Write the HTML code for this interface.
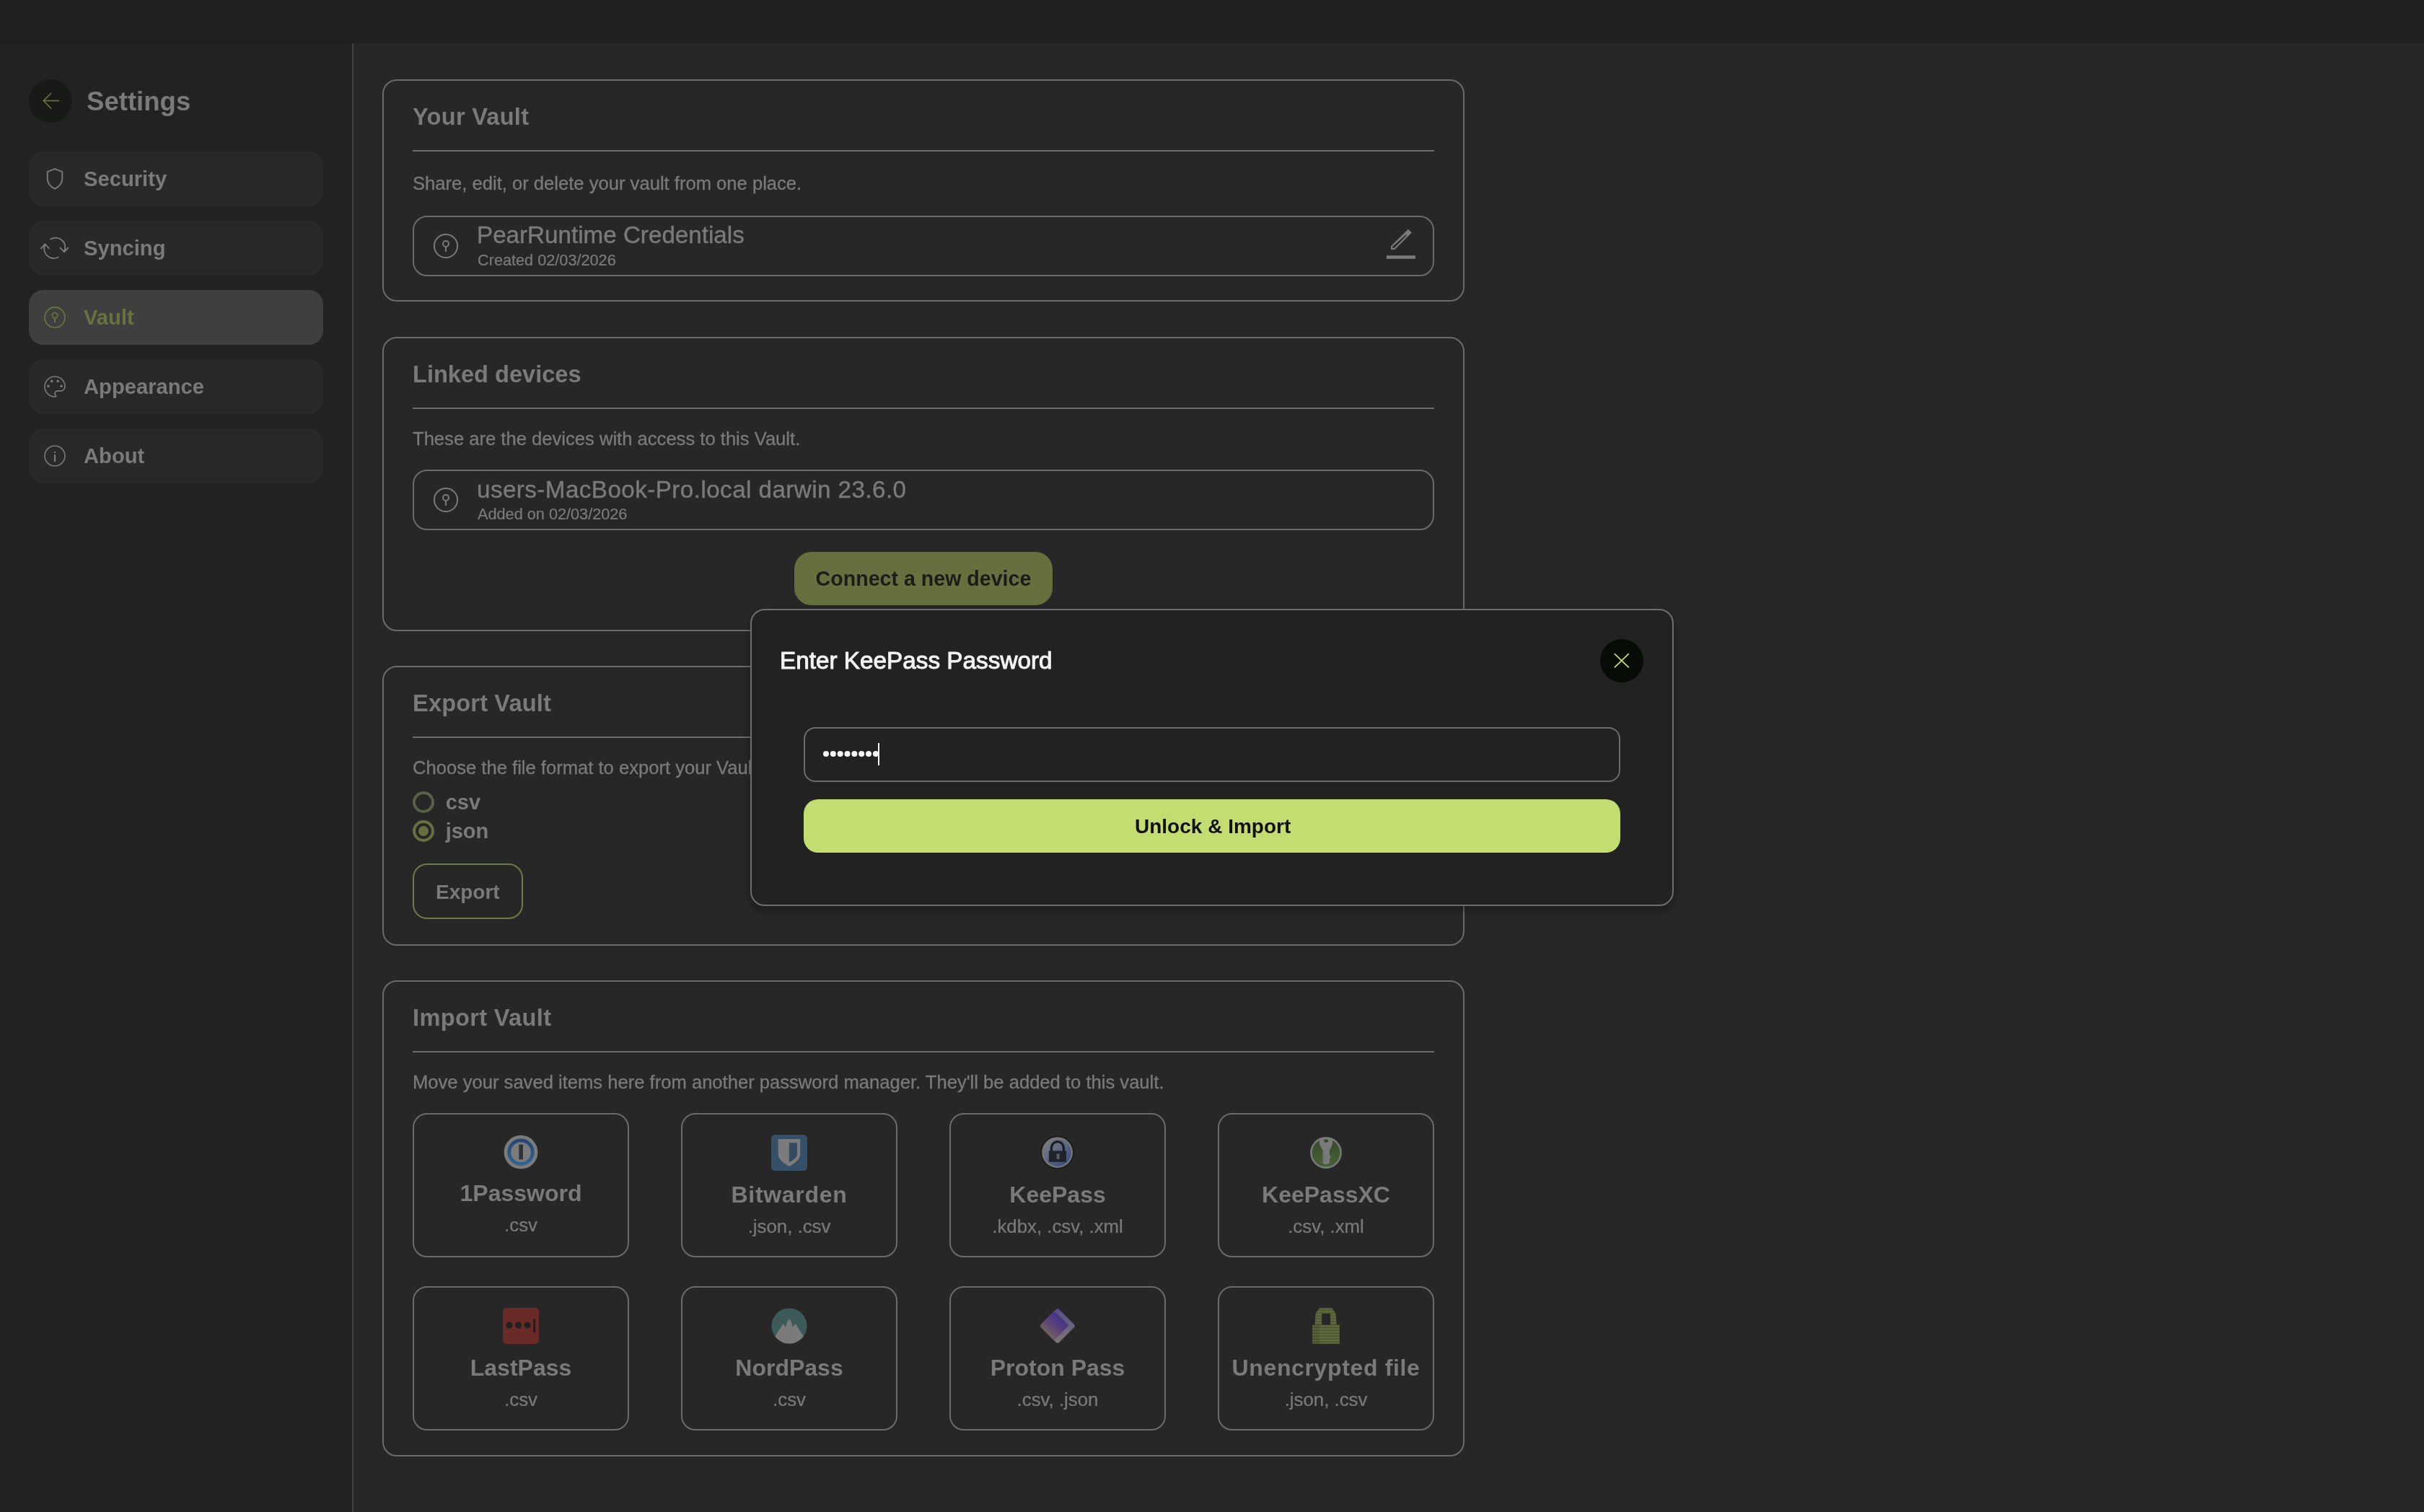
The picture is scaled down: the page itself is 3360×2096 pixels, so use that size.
<!DOCTYPE html>
<html>
<head>
<meta charset="utf-8">
<style>
html{zoom:2}
@media (max-width:2000px){html{zoom:1}}
html,body{margin:0;padding:0;background:#272727;overflow:hidden}
body{width:1680px;height:1048px;position:relative;will-change:transform;font-family:"Liberation Sans",sans-serif;color:#7a7a7a}
.abs{position:absolute}
.t{position:absolute;line-height:1;white-space:nowrap}
#topbar{left:0;top:0;width:1680px;height:30px;background:#202020}
#side{left:0;top:30px;width:244px;height:1018px;background:#222222;border-right:1px solid #434343}
.nav{position:absolute;left:20px;width:204px;height:38px;border-radius:10px;background:#292929}
.nav.on{background:#3f3f3f}
.nav svg{position:absolute;left:10px;top:11px}
.card{position:absolute;left:265px;width:748px;border:1px solid #6b6b6b;border-radius:10px}
.div{position:absolute;left:20px;width:708px;height:1px;background:#6b6b6b}
.row{position:absolute;left:20px;width:706px;border:1px solid #6b6b6b;border-radius:10px}
.title{font-weight:700;font-size:16.3px}
.desc{font-size:12.8px;-webkit-text-stroke:0.15px #7a7a7a}
.tile{position:absolute;width:148px;height:98px;border:1px solid #6b6b6b;border-radius:10px}
.tile .nm{position:absolute;left:0;width:148px;text-align:center;font-weight:700;font-size:16px;line-height:1;white-space:nowrap}
.tile .ex{position:absolute;left:0;width:148px;text-align:center;font-size:12.9px;-webkit-text-stroke:0.12px #7a7a7a;line-height:1;white-space:nowrap}
.tile .ic{position:absolute;left:62px;top:14px;width:24px;height:24px}
</style>
</head>
<body>
<div id="topbar" class="abs"></div>
<div id="side" class="abs">
  <!-- back button -->
  <div class="abs" style="left:20px;top:25px;width:30px;height:30px;border-radius:50%;background:#181a17">
    <svg width="30" height="30" viewBox="0 0 30 30" style="position:absolute;left:0;top:0"><path d="M20.75 14.8H10.1M15.4 9.6L10.1 14.8L15.4 20.15" fill="none" stroke="#66733f" stroke-width="0.8" stroke-linecap="round" stroke-linejoin="round"/></svg>
  </div>
  <div class="t" style="left:60px;top:31.7px;font-size:18.3px;font-weight:700">Settings</div>

  <div class="nav" style="top:75px">
    <svg width="16" height="16" viewBox="0 0 16 16"><path d="M8 1.05L13.15 3.1V7.9C13.15 11 11 13.3 8 14.85C5 13.3 2.85 11 2.85 7.9V3.1Z" fill="none" stroke="#7a7a7a" stroke-width="0.95" stroke-linejoin="round"/></svg>
    <div class="t" style="left:38px;top:12px;font-size:14.6px;font-weight:700">Security</div>
  </div>
  <div class="nav" style="top:123px">
    <svg width="22" height="16" viewBox="0 0 22 16" style="left:7px"><path d="M8.1 1.75A6.65 6.65 0 0 1 17.55 10.3M14.75 7.8L17.55 10.65L20.2 7.8M13.4 14.25A6.65 6.65 0 0 1 4.25 5.5M1.4 8.2L4.25 5.2L6.85 8.1" fill="none" stroke="#7a7a7a" stroke-width="0.9" stroke-linecap="round" stroke-linejoin="round"/></svg>
    <div class="t" style="left:38px;top:12px;font-size:14.6px;font-weight:700">Syncing</div>
  </div>
  <div class="nav on" style="top:171px">
    <svg width="16" height="16" viewBox="0 0 16 16"><circle cx="8" cy="8" r="7" fill="none" stroke="#66733f" stroke-width="0.9"/><circle cx="8.05" cy="6.65" r="1.8" fill="none" stroke="#66733f" stroke-width="0.9"/><path d="M8.05 8.45V11.55" stroke="#66733f" stroke-width="1.1"/></svg>
    <div class="t" style="left:38px;top:12px;font-size:14.6px;font-weight:700;color:#66733f">Vault</div>
  </div>
  <div class="nav" style="top:219px">
    <svg width="16" height="16" viewBox="0 0 16 16"><path d="M8.9 14.6C8.3 13.9 7.7 13.2 8.1 12.2C8.5 11.2 9.3 10.95 10.2 10.95H12.25C13.9 10.95 15 9.4 15 7.8C15 4 11.8 1 8 1C4.1 1 1 4.1 1 8C1 11.9 4.1 15 8 15C8.3 15 8.6 14.9 8.9 14.6Z" fill="none" stroke="#7a7a7a" stroke-width="0.8"/><circle cx="5.85" cy="4.2" r="0.9" fill="#7a7a7a"/><circle cx="10.1" cy="4.2" r="0.9" fill="#7a7a7a"/><circle cx="3.45" cy="7.6" r="0.9" fill="#7a7a7a"/><circle cx="12.55" cy="7.6" r="0.9" fill="#7a7a7a"/></svg>
    <div class="t" style="left:38px;top:12px;font-size:14.6px;font-weight:700">Appearance</div>
  </div>
  <div class="nav" style="top:267px">
    <svg width="16" height="16" viewBox="0 0 16 16"><circle cx="8" cy="8" r="7" fill="none" stroke="#7a7a7a" stroke-width="0.8"/><rect x="7.45" y="5" width="1.15" height="1" fill="#7a7a7a"/><rect x="7.45" y="7.1" width="1.15" height="4.85" fill="#7a7a7a"/></svg>
    <div class="t" style="left:38px;top:12px;font-size:14.6px;font-weight:700">About</div>
  </div>
</div>

<!-- CARD 1 -->
<div class="card" style="top:55px;height:152px">
  <div class="t title" style="left:20px;top:17px;letter-spacing:0.13px">Your Vault</div>
  <div class="div" style="top:48px"></div>
  <div class="t desc" style="left:20px;top:65px">Share, edit, or delete your vault from one place.</div>
  <div class="row" style="top:93.5px;height:40px">
    <svg class="abs" width="18" height="18" viewBox="0 0 18 18" style="left:13px;top:10.95px"><circle cx="9" cy="9" r="8.05" fill="none" stroke="#7a7a7a" stroke-width="1"/><circle cx="9" cy="7.5" r="2" fill="none" stroke="#7a7a7a" stroke-width="1"/><path d="M9 9.5V13" stroke="#7a7a7a" stroke-width="1.1"/></svg>
    <div class="t" style="left:43.5px;top:4px;font-size:16.6px;-webkit-text-stroke:0.2px #7a7a7a">PearRuntime Credentials</div>
    <div class="t" style="left:44px;top:24.5px;font-size:10.85px;-webkit-text-stroke:0.12px #7a7a7a">Created 02/03/2026</div>
    <svg class="abs" width="30" height="30" viewBox="0 0 30 30" style="left:670px;top:0.5px"><path d="M7 22L7 19.6L18.95 7.9L21.4 10.25L9.7 22Z M8.05 19.95L8.05 20.9L9.35 20.9L17.8 12.3L17.45 11.6Z" fill="#7a7a7a" fill-rule="evenodd"/><rect x="3.95" y="26.1" width="20" height="2.3" fill="#7a7a7a"/></svg>
  </div>
</div>

<!-- CARD 2 -->
<div class="card" style="top:233.5px;height:202px">
  <div class="t title" style="left:20px;top:17px">Linked devices</div>
  <div class="div" style="top:48px"></div>
  <div class="t desc" style="left:20px;top:63.5px">These are the devices with access to this Vault.</div>
  <div class="row" style="top:91px;height:40px">
    <svg class="abs" width="18" height="18" viewBox="0 0 18 18" style="left:13px;top:11px"><circle cx="9" cy="9" r="8.05" fill="none" stroke="#7a7a7a" stroke-width="1"/><circle cx="9" cy="7.5" r="2" fill="none" stroke="#7a7a7a" stroke-width="1"/><path d="M9 9.5V13" stroke="#7a7a7a" stroke-width="1.1"/></svg>
    <div class="t" style="left:43.5px;top:4.7px;font-size:16.6px;letter-spacing:0.22px;-webkit-text-stroke:0.2px #7a7a7a">users-MacBook-Pro.local darwin 23.6.0</div>
    <div class="t" style="left:44px;top:24.5px;font-size:10.85px;-webkit-text-stroke:0.12px #7a7a7a">Added on 02/03/2026</div>
  </div>
  <div class="abs" style="left:284.5px;top:148px;width:179px;height:37px;border-radius:12px;background:#66703f"></div>
  <div class="t" style="left:299.3px;top:159.7px;font-size:14.3px;font-weight:700;color:#1c1d18">Connect a new device</div>
</div>

<!-- CARD 3 -->
<div class="card" style="top:461.5px;height:192px">
  <div class="t title" style="left:20px;top:17px;letter-spacing:0.08px">Export Vault</div>
  <div class="div" style="top:48px"></div>
  <div class="t desc" style="left:20px;top:63.5px">Choose the file format to export your Vault:</div>
  <div class="abs" style="left:20px;top:86px;width:11px;height:11px;border:2px solid #596143;border-radius:50%"></div>
  <div class="t" style="left:42.85px;top:86.4px;font-size:14.5px;font-weight:700">csv</div>
  <div class="abs" style="left:20px;top:106px;width:11px;height:11px;border:2px solid #65713f;border-radius:50%"></div>
  <div class="abs" style="left:23.95px;top:109.95px;width:7.1px;height:7.1px;background:#65703f;border-radius:50%"></div>
  <div class="t" style="left:42.85px;top:106.65px;font-size:14.5px;font-weight:700">json</div>
  <div class="abs" style="left:20px;top:136px;width:74.5px;height:36.5px;border:1px solid #6f7b45;border-radius:10px"></div>
  <div class="t" style="left:36px;top:149px;font-size:14.0px;font-weight:700">Export</div>
</div>

<!-- CARD 4 -->
<div class="card" style="top:679.5px;height:328px">
  <div class="t title" style="left:20px;top:17px;letter-spacing:0.17px">Import Vault</div>
  <div class="div" style="top:48px"></div>
  <div class="t desc" style="left:20px;top:63.5px">Move your saved items here from another password manager. They'll be added to this vault.</div>
  <div class="tile" style="left:20px;top:91px">
    <svg class="abs" width="25" height="25" viewBox="0 0 50 50" style="left:61.5px;top:14px"><defs><linearGradient id="opg" x1="0" y1="0" x2="0" y2="1"><stop offset="0" stop-color="#244676"/><stop offset="1" stop-color="#306491"/></linearGradient></defs><circle cx="25" cy="24.2" r="23.4" fill="#7b7b7b"/><circle cx="25" cy="24.2" r="16.3" fill="none" stroke="url(#opg)" stroke-width="4.8"/><rect x="22.4" y="13.65" width="5.5" height="20.65" fill="#2e3236"/></svg>
    <div class="nm" style="top:46.3px">1Password</div>
    <div class="ex" style="top:70.35px">.csv</div>
  </div>
  <div class="tile" style="left:206px;top:91px">
    <svg class="abs" width="25" height="25" viewBox="0 0 50 50" style="left:61.5px;top:14px"><rect x="0" y="0" width="50" height="50" rx="5.5" fill="#36506a"/><path d="M9.7 6H40.2V27C40.2 34 33 39.5 25 43.8C17 39.5 9.7 34 9.7 27Z" fill="#7b7b7b"/><path d="M24.8 11.3H35.9V27C35.9 31.5 31 35.5 24.8 37.9Z" fill="#344b62"/></svg>
    <div class="nm" style="top:47.5px;letter-spacing:0.35px">Bitwarden</div>
    <div class="ex" style="top:71.45px">.json, .csv</div>
  </div>
  <div class="tile" style="left:392px;top:91px">
    <svg class="abs" width="25" height="25" viewBox="0 0 50 50" style="left:61.5px;top:14px"><defs><linearGradient id="kpg" x1="0.15" y1="0.1" x2="0.85" y2="0.9"><stop offset="0" stop-color="#777a82"/><stop offset="0.5" stop-color="#5d6582"/><stop offset="1" stop-color="#3b4c86"/></linearGradient></defs><circle cx="24.6" cy="24.6" r="23.2" fill="#1a1a1a"/><circle cx="24.6" cy="24.6" r="21.4" fill="#777"/><circle cx="24.6" cy="24.6" r="19.2" fill="url(#kpg)"/><path d="M16.4 23.5V18.1A8.5 8.5 0 0 1 33.4 18.1V23.5" fill="none" stroke="#1c1d22" stroke-width="3.3"/><rect x="12.9" y="22.4" width="24.1" height="15.3" fill="#202329"/><rect x="23.6" y="26.3" width="3.9" height="7.4" fill="#5a6070"/></svg>
    <div class="nm" style="top:47.5px">KeePass</div>
    <div class="ex" style="top:71.45px">.kdbx, .csv, .xml</div>
  </div>
  <div class="tile" style="left:578px;top:91px">
    <svg class="abs" width="25" height="25" viewBox="0 0 50 50" style="left:61.5px;top:14px"><defs><linearGradient id="kxg" x1="0" y1="0" x2="0" y2="1"><stop offset="0" stop-color="#34492b"/><stop offset="1" stop-color="#4a6334"/></linearGradient></defs><circle cx="25" cy="25" r="20.6" fill="url(#kxg)" stroke="#787878" stroke-width="2.6"/><path d="M15.6 8.5Q15.6 5 20 5H30Q34.3 5 34.3 8.5Q34.3 15.5 29.9 21V28.5L31.6 30.2V31.8L29.9 33V39.2Q25.2 42.5 20.4 39.2V21Q15.6 15.5 15.6 8.5Z" fill="#7a7a7a"/><ellipse cx="25.2" cy="8.6" rx="3" ry="2.2" fill="#34492b"/><path d="M21.9 21.5V37" stroke="#656565" stroke-width="0.9"/></svg>
    <div class="nm" style="top:47.5px">KeePassXC</div>
    <div class="ex" style="top:71.45px">.csv, .xml</div>
  </div>
  <div class="tile" style="left:20px;top:211px">
    <svg class="abs" width="25" height="25" viewBox="0 0 50 50" style="left:61.5px;top:14px"><rect x="0" y="0" width="50" height="50" rx="5" fill="#6a2a28"/><circle cx="9" cy="24" r="4.6" fill="#232020"/><circle cx="21.6" cy="24" r="4.6" fill="#232020"/><circle cx="34" cy="24" r="4.6" fill="#232020"/><rect x="42" y="15.6" width="3.2" height="18.8" rx="1" fill="#232020"/></svg>
    <div class="nm" style="top:47.5px">LastPass</div>
    <div class="ex" style="top:71.45px">.csv</div>
  </div>
  <div class="tile" style="left:206px;top:211px">
    <svg class="abs" width="25" height="25" viewBox="0 0 50 50" style="left:61.5px;top:14px"><defs><clipPath id="npc"><circle cx="25" cy="25" r="24.5"/></clipPath></defs><circle cx="25" cy="25" r="24.5" fill="#3d5a5a"/><path d="M0 50L5.7 39L16.4 22L20 26.7L23.2 16.5H26.8L30 26.7L33.6 22L44.3 39L50 50Z" fill="#7b7b7b" clip-path="url(#npc)"/></svg>
    <div class="nm" style="top:47.5px">NordPass</div>
    <div class="ex" style="top:71.45px">.csv</div>
  </div>
  <div class="tile" style="left:392px;top:211px">
    <svg class="abs" width="25" height="25" viewBox="0 0 50 50" style="left:61.5px;top:14px"><defs><linearGradient id="ppg" x1="0.9" y1="0.1" x2="0.15" y2="0.95"><stop offset="0" stop-color="#392f8a"/><stop offset="0.45" stop-color="#573f7c"/><stop offset="1" stop-color="#7e6c57"/></linearGradient><linearGradient id="ppb" x1="0.5" y1="0" x2="0.5" y2="1"><stop offset="0" stop-color="#574f86"/><stop offset="1" stop-color="#7d7676"/></linearGradient></defs><path d="M22.5 2.5Q25 0 27.5 2.5L47.5 22.5Q50 25 47.5 27.5L27.5 47.5Q25 50 22.5 47.5L2.5 27.5Q0 25 2.5 22.5Z" fill="url(#ppb)"/><path d="M17.8 6.7Q20.3 4.3 22.8 6.7L38.5 22.3Q40.6 24.4 38.5 26.6L22.6 42.8Q20 45.4 17.4 42.8L2.5 27.5Q0 25 2.5 22.5Z" fill="url(#ppg)"/></svg>
    <div class="nm" style="top:47.5px">Proton Pass</div>
    <div class="ex" style="top:71.45px">.csv, .json</div>
  </div>
  <div class="tile" style="left:578px;top:211px">
    <svg class="abs" width="25" height="25" viewBox="0 0 50 50" style="left:61.5px;top:14px"><defs><pattern id="ufs" width="50" height="4" patternUnits="userSpaceOnUse"><rect width="50" height="4" fill="#5f6b3d"/><rect y="2.4" width="50" height="1.6" fill="#4d5733"/></pattern></defs><path d="M16 0.2H33.5L38.6 8L39.8 23.6H31.1V8.1H19.2V23.6H9.7L10.5 8Z" fill="url(#ufs)"/><rect x="6.1" y="23.6" width="37.7" height="26.2" fill="url(#ufs)"/><rect x="6.1" y="23.6" width="10" height="26.2" fill="#000" opacity="0.1"/></svg>
    <div class="nm" style="top:47.5px;letter-spacing:0.32px">Unencrypted file</div>
    <div class="ex" style="top:71.45px">.json, .csv</div>
  </div>
</div>

<!-- overlay modal -->
<div class="abs" style="left:520px;top:422px;width:638px;height:204px;background:#222222;border:1px solid #6e6e6e;border-radius:10px;box-shadow:0 3px 6px rgba(0,0,0,0.3)">
  <div class="t" style="left:19.5px;top:26.5px;font-size:16.65px;color:#f2f2f2;-webkit-text-stroke:0.5px #f2f2f2">Enter KeePass Password</div>
  <div class="abs" style="left:588px;top:20px;width:30px;height:30px;border-radius:50%;background:#080c06">
    <svg width="30" height="30" viewBox="0 0 30 30" style="position:absolute;left:0;top:0"><path d="M9.9 10.1L19.9 19.7M19.9 10.1L9.9 19.7" stroke="#c4dd70" stroke-width="0.9"/></svg>
  </div>
  <div class="abs" style="left:36px;top:81px;width:564px;height:36px;border:1px solid #6c6c6c;border-radius:8px"></div>
  <svg class="abs" width="50" height="6" viewBox="0 0 100 12" style="left:49.35px;top:96.5px"><circle cx="4.00" cy="6" r="4" fill="#f5f5f5"/><circle cx="13.84" cy="6" r="4" fill="#f5f5f5"/><circle cx="23.68" cy="6" r="4" fill="#f5f5f5"/><circle cx="33.52" cy="6" r="4" fill="#f5f5f5"/><circle cx="43.36" cy="6" r="4" fill="#f5f5f5"/><circle cx="53.20" cy="6" r="4" fill="#f5f5f5"/><circle cx="63.04" cy="6" r="4" fill="#f5f5f5"/><circle cx="72.88" cy="6" r="4" fill="#f5f5f5"/></svg>
  <div class="abs" style="left:87.5px;top:92px;width:1px;height:15.5px;background:#f5f5f5"></div>
  <div class="abs" style="left:36px;top:131px;width:566px;height:37px;border-radius:10px;background:#c4dd70"></div>
  <div class="t" style="left:265.5px;top:143px;font-size:14px;font-weight:700;color:#111">Unlock &amp; Import</div>
</div>
</body>
</html>
